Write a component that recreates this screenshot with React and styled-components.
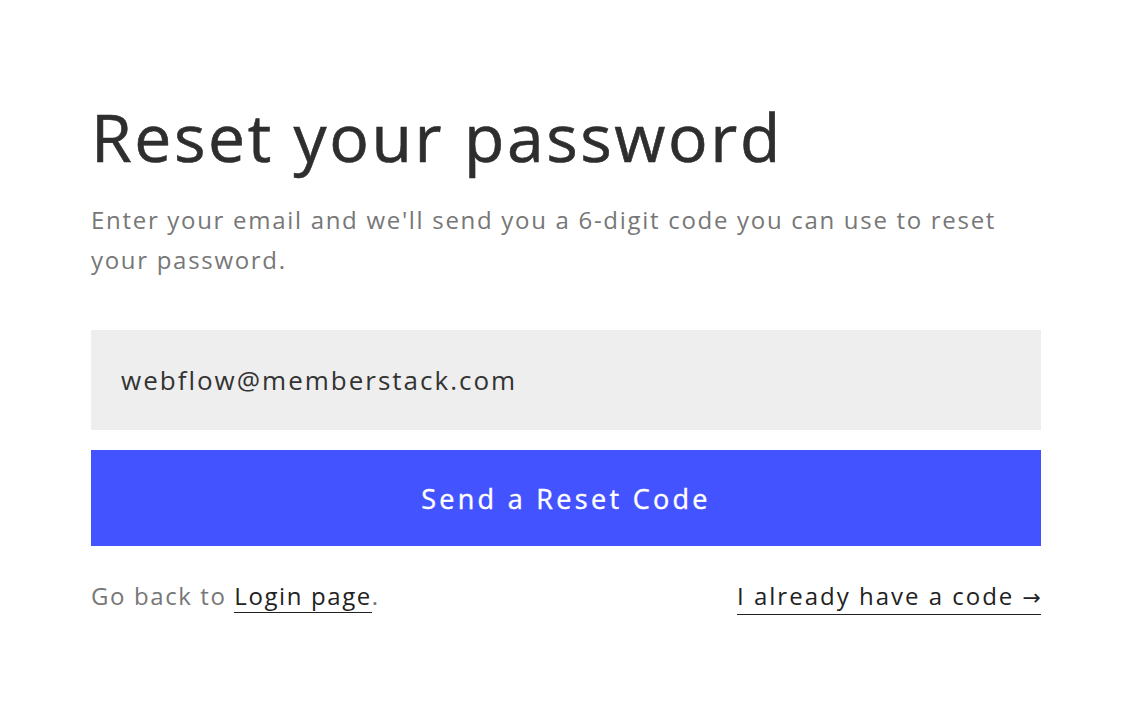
import React from "react"
import styled, { createGlobalStyle } from "styled-components"

const GlobalStyle = createGlobalStyle`
  body {
    margin: 0;
    background: #fff;
    font-family: "Open Sans", "Liberation Sans", sans-serif;
  }
`

const Page = styled.div`
  width: 950px;
  padding: 96px 0 0 91px;
`

const Title = styled.h1`
  margin: 0;
  font-size: 66px;
  line-height: 80px;
  font-weight: 500;
  color: #2e2e2e;
  letter-spacing: 2.6px;
  -webkit-text-stroke: 0.6px #2e2e2e;
`

const Lead = styled.p`
  margin: 24px 0 0;
  font-size: 24px;
  line-height: 40px;
  color: #777;
  letter-spacing: 1.7px;
`

const Form = styled.form`
  display: flex;
  flex-direction: column;
  gap: 20px;
  margin-top: 50px;
`

const Field = styled.input`
  box-sizing: border-box;
  height: 100px;
  border: 0;
  background: #eee;
  padding: 0 30px;
  font-family: inherit;
  font-size: 26px;
  color: #333;
  letter-spacing: 2px;
  outline: none;
`

const Submit = styled.button`
  height: 96px;
  border: 0;
  background: #4353ff;
  color: #fff;
  font-family: inherit;
  font-size: 27px;
  font-weight: 500;
  letter-spacing: 3.3px;
  -webkit-text-stroke: 0.4px #fff;
  cursor: pointer;
`

const Footer = styled.div`
  display: flex;
  justify-content: space-between;
  align-items: flex-start;
  margin-top: 34px;
  font-size: 24px;
  line-height: 32px;
  color: #777;
  letter-spacing: 1.6px;
`

const Inline = styled.a`
  color: #222;
  text-decoration: none;
  border-bottom: 1px solid #222;
`

const CodeLink = styled.a`
  color: #222;
  text-decoration: none;
  border-bottom: 1px solid #222;
  padding-bottom: 2px;
  letter-spacing: 2px;
`

const Arrow = styled.span`
  font-family: "DejaVu Sans", sans-serif;
  font-size: 22px;
  line-height: 0;
  letter-spacing: 0;
`

export default function App() {
  return (
    <>
      <GlobalStyle />
      <Page>
        <Title>Reset your password</Title>
        <Lead>
          Enter your email and we'll send you a 6-digit code you can use to reset your password.
        </Lead>
        <Form onSubmit={e => e.preventDefault()}>
          <Field type="email" defaultValue="webflow@memberstack.com" />
          <Submit type="submit">Send a Reset Code</Submit>
        </Form>
        <Footer>
          <span>
            Go back to <Inline href="#">Login page</Inline>.
          </span>
          <CodeLink href="#">
            I already have a code <Arrow>→</Arrow>
          </CodeLink>
        </Footer>
      </Page>
    </>
  )
}
